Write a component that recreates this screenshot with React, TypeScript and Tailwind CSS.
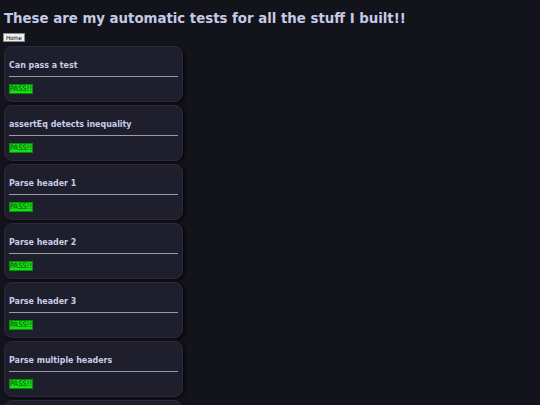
import React from "react";

const tests = [
  "Can pass a test",
  "assertEq detects inequality",
  "Parse header 1",
  "Parse header 2",
  "Parse header 3",
  "Parse multiple headers",
  "Parse body",
];

function Card({ title }: { title: string }) {
  return (
    <div className="w-[179px] shrink-0 rounded-[8px] border border-[#2a2a3b] bg-[#1e1e2d] px-[4px] pt-[12px] pb-[7px] shadow-[2px_1px_3px_rgba(0,0,0,0.6)]">
      <h3 className="h-[12px] text-[8.8px] leading-[12px] font-bold text-[#c9cde6]">{title}</h3>
      <div className="mt-[5px] h-[1px] bg-[#9a9aa8]" />
      <div className="mt-[7px] flex">
        <span className="border border-[#0a8a0a] bg-[#15e015] px-0 text-[7.5px] leading-[8px] text-[#063d06]">
          PASS!!
        </span>
      </div>
    </div>
  );
}

export default function App() {
  return (
    <div
      className="h-[405px] w-[540px] overflow-hidden bg-[#12131b] pl-[4px]"
      style={{ fontFamily: '"DejaVu Sans Condensed", "DejaVu Sans", sans-serif' }}
    >
      <h1 className="pt-[8px] text-[14.8px] leading-[20px] font-bold text-[#c5cae6]">
        These are my automatic tests for all the stuff I built!!
      </h1>
      <div className="mt-[5px] -ml-[1px] flex">
        <button className="h-[9px] border border-[#8a8a8a] bg-[#efefef] px-[2px] text-[6px] leading-[7px] text-black">
          Home
        </button>
      </div>
      <div className="mt-[4px] flex flex-col gap-[3px]">
        {tests.map((t) => (
          <Card key={t} title={t} />
        ))}
      </div>
    </div>
  );
}
